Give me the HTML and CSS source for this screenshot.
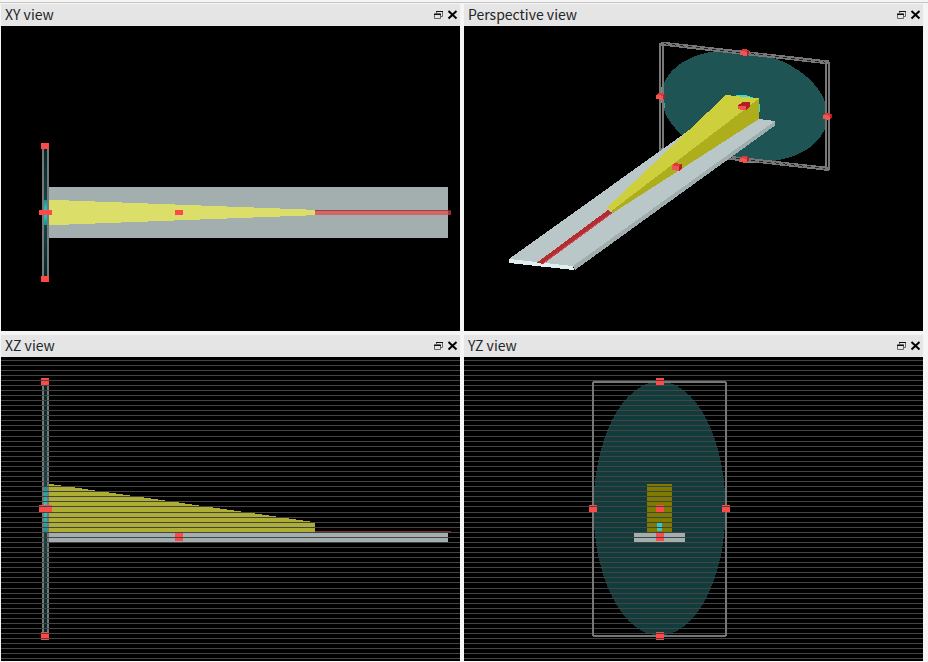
FILE: index.html
```html
<!DOCTYPE html>
<html lang="en">
<head>
<meta charset="utf-8">
<title>Geometry views</title>
<link rel="stylesheet" href="styles.css">
</head>
<body>
<svg class="defs" aria-hidden="true">
  <defs>
    <pattern id="grid" x="0" y="360" width="10" height="76" patternUnits="userSpaceOnUse">
      <path fill="#444444" d="M0 0h10v1H0zM0 5h10v1H0zM0 10h10v1H0zM0 15h10v1H0zM0 20h10v1H0zM0 25h10v1H0zM0 30h10v1H0zM0 35h10v1H0zM0 40h10v1H0zM0 45h10v1H0zM0 50h10v1H0zM0 55h10v1H0zM0 60h10v1H0zM0 65h10v1H0zM0 70h10v1H0z"/>
    </pattern>
    <linearGradient id="lens" x1="0" y1="0" x2="0" y2="1">
      <stop offset="0" stop-color="#0b9696"/><stop offset="0.5" stop-color="#38cccb"/><stop offset="1" stop-color="#0b9696"/>
    </linearGradient>
    <linearGradient id="disc" x1="0" y1="0" x2="0" y2="1">
      <stop offset="0" stop-color="#022626"/><stop offset="0.5" stop-color="#164848"/><stop offset="1" stop-color="#022626"/>
    </linearGradient>
    <symbol id="float" viewBox="0 0 14 22">
      <path fill="none" stroke="#666" d="M2.500 9.500h6v5h-6zM4.500 9V7.500h6v5H9"/>
      <path fill="none" stroke="#111" d="M4 7.500h7M2 10.500h7"/>
    </symbol>
    <symbol id="close" viewBox="0 0 14 22">
      <path fill="none" stroke="#000" stroke-width="2" d="M2.500 7l8 7.500M10.500 7l-8 7.500"/>
    </symbol>
    <symbol id="cube" viewBox="0 0 9 7" overflow="visible">
      <path fill="#b21e22" d="M0 2L2.500 0 9 .7V5L6.500 7z"/>
      <path fill="#f25454" d="M0 2l6.500.6V7L0 6.200z"/>
      <path fill="#d83a3c" d="M0 2L2.500 0 9 .7 6.500 2.600z"/>
    </symbol>
  </defs>
</svg>
<main class="views">
  <section class="view">
    <header class="bar">
      <h2 class="title">XY view</h2>
      <button class="tool" aria-label="Float XY view"><svg><use href="#float"/></svg></button>
      <button class="tool" aria-label="Close XY view"><svg><use href="#close"/></svg></button>
    </header>
    <div class="canvas">
      <svg class="scene" viewBox="1 26 459 305" preserveAspectRatio="xMinYMin meet">
        <rect x="49" y="187" width="399" height="51" fill="#a3afae"/>
        <rect x="315" y="210" width="133" height="5" fill="#d0666a"/>
        <rect x="448" y="210" width="3" height="5" fill="#a33233"/>
        <rect x="315" y="210" width="133" height="1" fill="#a33c40"/>
        <rect x="448" y="210" width="3" height="1" fill="#7a1114"/>
        <path fill="#dcde6a" d="M49 199.740L315 209.840V215.160L49 225.260z"/>
        <rect x="42" y="149" width="7" height="127" fill="#777"/>
        <rect x="44" y="149" width="3" height="127" fill="url(#disc)"/>
        <rect x="44" y="200" width="3" height="25" fill="url(#lens)"/>
        <path fill="#ff4848" d="M41 143h8v6h-8zM41 276h8v6h-8zM39 210h13v5H39zM175 210h8v5h-8z"/>
      </svg>
    </div>
  </section>
  <section class="view">
    <header class="bar">
      <h2 class="title">Perspective view</h2>
      <button class="tool" aria-label="Float Perspective view"><svg><use href="#float"/></svg></button>
      <button class="tool" aria-label="Close Perspective view"><svg><use href="#close"/></svg></button>
    </header>
    <div class="canvas">
      <svg class="scene" viewBox="464 26 459 305" preserveAspectRatio="xMinYMin meet">
        <circle r="1" transform="matrix(83 9.500 0 55 744.500 106)" fill="#1f5454"/>
        <path fill="none" stroke="#5c9898" stroke-width="3" d="M662 87Q661 97 664 108M731 158Q748 163 766 161"/>
        <path fill="none" stroke="#777" stroke-width="4" d="M661 43.500L829 62.500M661 150L829 169"/>
        <path fill="none" stroke="#000" stroke-width="0.700" stroke-dasharray="4 4" d="M664 43.800L826 62.200M664 150.300L826 168.700"/>
        <path fill="#777" d="M659 43h2v109h-2zM662 43h2v109h-2zM825 62h2v107h-2zM828 62h2v108h-2z"/>
        <circle r="1" transform="matrix(16 2 0 11 744.500 106)" fill="#30dcdc"/>
        <path fill="#a0adae" d="M573 266L775 121V125.500L575 270z"/>
        <path fill="#b9c7c8" d="M509 259L713 113 775 121 573 266z"/>
        <path fill="#e0efef" d="M509 259l64 7 1 4-65-7z"/>
        <path fill="#b22d31" d="M537 262.500L608 210l4 2.500L543 264z"/>
        <path fill="none" stroke="#d6484b" d="M543 263.500L612 213"/>
        <path fill="#aead1c" d="M759 98.500V119L612 213.500V210z"/>
        <path fill="#cecf3c" d="M606 208.500L726 95 759 98.500 612 210.500z"/>
        <use href="#cube" x="656" y="93" width="9" height="7"/>
        <use href="#cube" x="740" y="49" width="9" height="7"/>
        <use href="#cube" x="823" y="113" width="9" height="7"/>
        <use href="#cube" x="740" y="156" width="9" height="7"/>
        <use href="#cube" x="672" y="163" width="10" height="8"/>
        <path fill="#b21e22" d="M738 105.500l5.500-4 6.500 1v3.500L746 110z"/>
        <path fill="#f25454" d="M738 105.500l8 .6V110l-8-.7z"/>
      </svg>
    </div>
  </section>
  <section class="view">
    <header class="bar">
      <h2 class="title">XZ view</h2>
      <button class="tool" aria-label="Float XZ view"><svg><use href="#float"/></svg></button>
      <button class="tool" aria-label="Close XZ view"><svg><use href="#close"/></svg></button>
    </header>
    <div class="canvas">
      <svg class="scene" viewBox="1 357 459 304" preserveAspectRatio="xMinYMin meet">
        <rect x="49" y="533" width="399" height="9" fill="#a3afae"/>
        <rect x="315" y="531" width="136" height="1" fill="#8c2a2a"/>
        <path fill="#aead34" d="M49 483.800L315 522.200V532H49z"/>
        <rect x="42" y="385" width="7" height="247" fill="#777"/>
        <rect x="44" y="385" width="3" height="247" fill="url(#disc)"/>
        <rect x="44" y="486" width="3" height="46" fill="url(#lens)"/>
        <path fill="#ff4848" d="M41 378h8v7h-8zM41 632h8v8h-8zM175 533h8v8h-8zM39 505h13v7H39z"/>
        <rect x="1" y="357" width="459" height="304" fill="url(#grid)"/>
      </svg>
    </div>
  </section>
  <section class="view">
    <header class="bar">
      <h2 class="title">YZ view</h2>
      <button class="tool" aria-label="Float YZ view"><svg><use href="#float"/></svg></button>
      <button class="tool" aria-label="Close YZ view"><svg><use href="#close"/></svg></button>
    </header>
    <div class="canvas">
      <svg class="scene" viewBox="464 357 459 304" preserveAspectRatio="xMinYMin meet">
        <ellipse cx="659.500" cy="508.500" rx="66" ry="127" fill="#123c3c"/>
        <rect x="647" y="484" width="25" height="48" fill="#7e7b00"/>
        <rect x="657" y="523" width="5" height="8" fill="#30c8c8"/>
        <rect x="634" y="533" width="51" height="9" fill="#a3afae"/>
        <path fill="#777" d="M593 381h133v2H593zM593 635h133v2H593zM592 382h2v254h-2zM725 382h2v254h-2z"/>
        <path fill="#ff4848" d="M656 378h8v7h-8zM656 632h8v8h-8zM656 533h8v8h-8zM656 505h8v7h-8zM589 505h8v7h-8zM722 505h8v7h-8z"/>
        <rect x="464" y="357" width="459" height="304" fill="url(#grid)"/>
        <path fill="#777" d="M592 382h2v123h-2zM592 512h2v124h-2zM725 382h2v123h-2zM725 512h2v124h-2z"/>
      </svg>
    </div>
  </section>
</main>
</body>
</html>
```
FILE: styles.css
```css
* {
  box-sizing: border-box;
}

body {
  margin: 0;
  background: #f5f5f5;
  color: #232629;
  font-family: "Noto Sans CJK SC", "Noto Sans", sans-serif;
  font-size: 14px;
}

.defs {
  position: absolute;
  width: 0;
  height: 0;
}

.views {
  display: grid;
  grid-template-columns: 1fr 1fr;
  grid-template-rows: 327fr 326fr;
  gap: 4px;
  min-height: 100vh;
  padding: 4px 5px 1px 1px;
  background: linear-gradient(#c4c4c4, #c4c4c4) 0 2px / 100% 1px no-repeat;
}

.view {
  display: flex;
  flex-direction: column;
  min-width: 0;
}

.bar {
  display: flex;
  height: 22px;
  padding-left: 4px;
  background: #e5e5e5;
}

.title {
  flex: 1;
  margin: 0;
  font-size: 14px;
  font-weight: 400;
  line-height: 20px;
}

.tool {
  width: 14px;
  height: 22px;
  padding: 0;
  border: 0;
  background: none;
}

.tool svg {
  display: block;
  width: 14px;
  height: 22px;
}

.canvas {
  flex: 1;
  background: #000;
}

.scene {
  display: block;
  width: 100%;
  shape-rendering: crispEdges;
}
```
